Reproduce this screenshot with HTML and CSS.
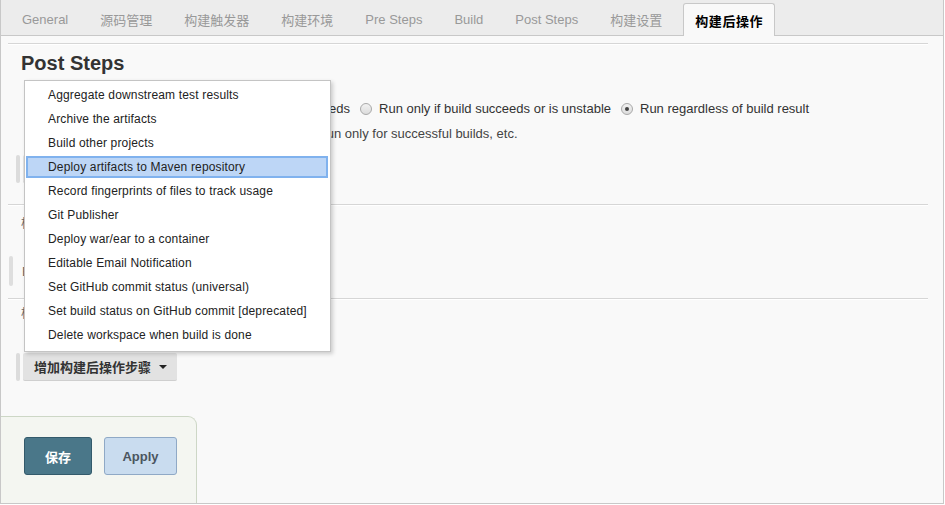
FILE: index.html
```html
<!DOCTYPE html>
<html lang="zh-CN">

<head>
    <meta charset="UTF-8">
    <meta name="viewport" content="width=device-width, initial-scale=1.0">
    <title>Post Steps</title>
    <link rel="stylesheet" href="styles.css">
</head>

<body>
    <div class="page">
        <div class="tabs">
            <div class="tab">General</div>
            <div class="tab">源码管理</div>
            <div class="tab">构建触发器</div>
            <div class="tab">构建环境</div>
            <div class="tab">Pre Steps</div>
            <div class="tab">Build</div>
            <div class="tab">Post Steps</div>
            <div class="tab">构建设置</div>
            <div class="tab active">构建后操作</div>
        </div>

        <div class="main">
            <div class="rule"></div>
            <h2 class="section_title">Post Steps</h2>

            <div class="radio_row">
                <label class="radio"><i class="dot"></i>Run only if build succeeds</label>
                <label class="radio"><i class="dot"></i>Run only if build succeeds or is unstable</label>
                <label class="radio"><i class="dot checked"></i>Run regardless of build result</label>
            </div>
            <div class="help">Should the post-build steps run only for successful builds, etc.</div>

            <div class="btn_row first">
                <span class="btn_bar"></span>
                <button class="btn_gray">增加构建步骤<i class="caret"></i></button>
            </div>

            <div class="rule gap1"></div>
            <div class="sub_title">构建设置</div>
            <div class="option_row">
                <span class="side_bar"></span>
                <span class="option_text">E-mail Notification</span>
            </div>

            <div class="rule gap2"></div>
            <div class="sub_title second">构建后操作</div>
            <div class="btn_row add">
                <span class="btn_bar"></span>
                <button class="btn_gray">增加构建后操作步骤<i class="caret"></i></button>
            </div>
        </div>

        <div class="bottom_bar">
            <button class="btn_save">保存</button>
            <button class="btn_apply">Apply</button>
        </div>

        <!-- 下拉菜单 -->
        <ul class="dropdown">
            <li>Aggregate downstream test results</li>
            <li>Archive the artifacts</li>
            <li>Build other projects</li>
            <li class="active">Deploy artifacts to Maven repository</li>
            <li>Record fingerprints of files to track usage</li>
            <li>Git Publisher</li>
            <li>Deploy war/ear to a container</li>
            <li>Editable Email Notification</li>
            <li>Set GitHub commit status (universal)</li>
            <li>Set build status on GitHub commit [deprecated]</li>
            <li>Delete workspace when build is done</li>
        </ul>
    </div>
</body>

</html>
```

FILE: styles.css
```css
* {
    margin: 0;
    padding: 0;
    box-sizing: border-box;
}

body {
    font-family: "Liberation Sans", Arial, "Noto Sans CJK SC", sans-serif;
    font-size: 13px;
    color: #333;
    background: #fff;
}

.page {
    position: relative;
    width: 944px;
    height: 504px;
    display: flex;
    flex-direction: column;
    background: #f9f9f9;
    border-left: 1px solid #c8c8c8;
    border-right: 1px solid #c8c8c8;
    border-bottom: 1px solid #c8c8c8;
}

/* tab bar */
.tabs {
    display: flex;
    height: 36px;
    padding-left: 5px;
    background: #ececec;
    border-bottom: 1px solid #c8c8c8;
}

.tab {
    padding: 4px 16px 0;
    height: 35px;
    display: flex;
    align-items: center;
    color: #999;
    white-space: nowrap;
}

.tab.active {
    margin: 3px 0 -1px 5px;
    height: 33px;
    padding: 0 11px;
    color: #000;
    font-weight: bold;
    letter-spacing: .6px;
    background: #f9f9f9;
    border: 1px solid #c8c8c8;
    border-bottom: none;
    border-radius: 3px 3px 0 0;
}

/* main */
.main {
    flex: 1;
    margin: 0 15px 0 7px;
}

.rule {
    margin-top: 7px;
    border-top: 1px solid #d6d6d6;
    border-bottom: 1px solid #fff;
}

.rule.gap1 {
    margin-top: 21px;
}

.rule.gap2 {
    margin-top: 12px;
}

.section_title {
    margin-top: 6px;
    padding-left: 13px;
    font-size: 20px;
    line-height: 24px;
    color: #333;
}

.radio_row {
    display: flex;
    margin-top: 24px;
    padding-left: 172px;
    line-height: 20px;
}

.radio {
    display: flex;
    align-items: center;
    margin-right: 10px;
    white-space: nowrap;
}

.dot {
    width: 12px;
    height: 12px;
    margin-right: 7px;
    border: 1px solid #a9a9a9;
    border-radius: 50%;
    background: linear-gradient(#f2f2f2, #dcdcdc);
    position: relative;
}

.dot.checked::after {
    content: "";
    position: absolute;
    left: 3px;
    top: 3px;
    width: 4px;
    height: 4px;
    border-radius: 50%;
    background: #444;
}

.help {
    margin-top: 7px;
    padding-left: 154px;
    line-height: 16px;
    color: #444;
}

.btn_row {
    display: flex;
    margin-left: 8px;
    height: 28px;
}

.btn_row.first {
    margin-top: 13px;
}

.btn_row.add {
    margin-top: 30px;
}

.btn_bar {
    width: 4px;
    margin-right: 3px;
    background: #dcdcdc;
    border-radius: 2px;
}

.btn_gray {
    display: flex;
    align-items: center;
    padding: 0 10px 0 11px;
    font-family: inherit;
    font-size: 13px;
    font-weight: bold;
    color: #333;
    background: #e2e2e2;
    border: none;
    border-bottom: 1px solid #cfcfcf;
    border-radius: 2px;
}

.caret {
    width: 0;
    height: 0;
    margin-left: 8px;
    border-left: 4px solid transparent;
    border-right: 4px solid transparent;
    border-top: 4px solid #222;
}

.sub_title {
    margin-top: 9px;
    padding-left: 13px;
    font-size: 12px;
    line-height: 18px;
    color: #666;
}

.sub_title.second {
    margin-top: 5px;
}

.option_row {
    display: flex;
    align-items: center;
    margin-top: 23px;
    height: 30px;
    margin-left: 1px;
}

.side_bar {
    width: 4px;
    height: 30px;
    margin-right: 9px;
    background: #dedede;
    border-radius: 2px;
}

.option_text {
    color: #666;
}

/* bottom buttons */
.bottom_bar {
    display: flex;
    gap: 12px;
    width: 196px;
    height: 87px;
    padding: 20px 0 0 23px;
    background: #f4f6f1;
    border-top: 1px solid #cdd7c6;
    border-right: 1px solid #cdd7c6;
    border-radius: 0 9px 0 0;
}

.btn_save,
.btn_apply {
    height: 38px;
    font-family: inherit;
    font-size: 13px;
    font-weight: bold;
    border-radius: 3px;
}

.btn_save {
    width: 68px;
    color: #fff;
    background: #4a7789;
    border: 1px solid #335a6b;
}

.btn_apply {
    width: 73px;
    color: #4b5560;
    background: #c9dcef;
    border: 1px solid #8fa9c6;
}

/* dropdown menu */
.dropdown {
    position: absolute;
    left: 23px;
    top: 80px;
    width: 307px;
    padding: 2px 0 4px;
    list-style: none;
    background: #fff;
    border: 1px solid #c4c4c4;
    box-shadow: 2px 2px 4px rgba(0, 0, 0, .18);
    font-size: 12px;
    letter-spacing: .16px;
    color: #222;
}

.dropdown li {
    height: 24px;
    line-height: 24px;
    padding-left: 23px;
    white-space: nowrap;
}

.dropdown li.active {
    height: 22px;
    margin: 1px 2px 1px 1px;
    padding-left: 20px;
    line-height: 18px;
    background: #bdd6f6;
    border: 2px solid #80b2ee;
}
```
